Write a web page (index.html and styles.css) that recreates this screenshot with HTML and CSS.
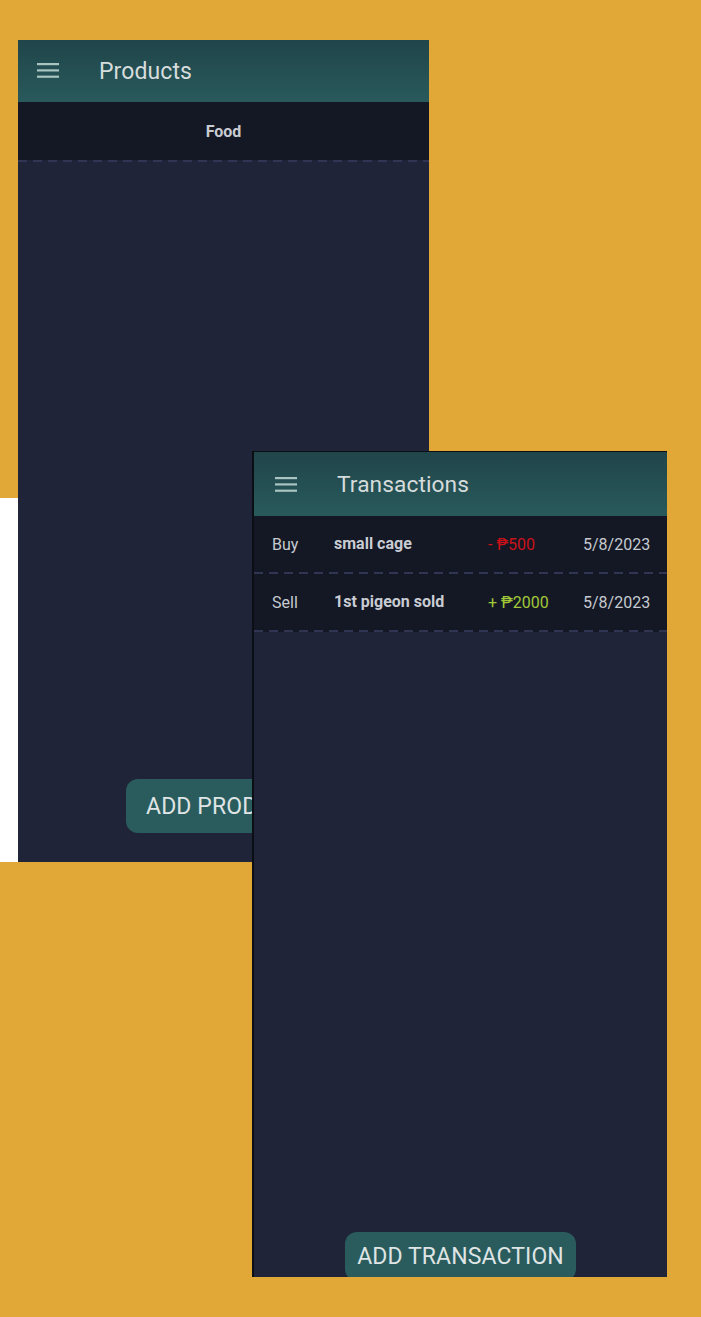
FILE: index.html
```html
<!DOCTYPE html>
<html>
<head>
<meta charset="utf-8">
<link rel="stylesheet" href="styles.css">
</head>
<body>
<div class="canvas">
  <div class="white-block"></div>

  <section class="screen screen-products">
    <header class="appbar appbar-products">
      <svg class="menu" width="22" height="15" viewBox="0 0 22 15"><rect x="0" y="0" width="22" height="2.2" fill="#a9c4c1"/><rect x="0" y="6.3" width="22" height="2.2" fill="#a9c4c1"/><rect x="0" y="12.6" width="22" height="2.2" fill="#a9c4c1"/></svg>
      <h1 class="title">Products</h1>
    </header>
    <div class="tabbar">
      <span class="tab">Food</span>
    </div>
    <div class="spacer"></div>
    <div class="actions actions-products">
      <button class="btn">ADD PRODUCT</button>
    </div>
  </section>

  <section class="screen screen-tx">
    <header class="appbar appbar-tx">
      <svg class="menu" width="22" height="15" viewBox="0 0 22 15"><rect x="0" y="0" width="22" height="2.2" fill="#a9c4c1"/><rect x="0" y="6.3" width="22" height="2.2" fill="#a9c4c1"/><rect x="0" y="12.6" width="22" height="2.2" fill="#a9c4c1"/></svg>
      <h1 class="title">Transactions</h1>
    </header>
    <div class="tx-list">
      <div class="tx-row">
        <span class="tx-type">Buy</span>
        <span class="tx-name">small cage</span>
        <span class="tx-amt neg">- ₱500</span>
        <span class="tx-date">5/8/2023</span>
      </div>
      <div class="tx-row">
        <span class="tx-type">Sell</span>
        <span class="tx-name">1st pigeon sold</span>
        <span class="tx-amt pos">+ ₱2000</span>
        <span class="tx-date">5/8/2023</span>
      </div>
    </div>
    <div class="spacer"></div>
    <div class="actions actions-tx">
      <button class="btn">ADD TRANSACTION</button>
    </div>
  </section>
</div>
</body>
</html>
```

FILE: styles.css
```css
html, body {
  margin: 0;
  padding: 0;
  background: #e1a838;
}
body {
  font-family: Roboto, "Liberation Sans", sans-serif;
}
.canvas {
  position: relative;
  width: 701px;
  height: 1317px;
  overflow: hidden;
  background: #e1a838;
}
.white-block {
  position: absolute;
  left: 0;
  top: 498px;
  width: 18px;
  height: 364px;
  background: #ffffff;
}
.screen {
  position: absolute;
  display: flex;
  flex-direction: column;
  background: #1f2438;
  overflow: hidden;
  box-sizing: border-box;
}
.screen-products {
  left: 18px;
  top: 40px;
  width: 411px;
  height: 822px;
}
.screen-tx {
  left: 252px;
  top: 451px;
  width: 415px;
  height: 826px;
  border-left: 2px solid #0c0e15;
  border-top: 1px solid #0c0e15;
}
.appbar {
  display: flex;
  align-items: center;
  background: linear-gradient(#20454a, #295a5b);
  flex: none;
}
.appbar-products {
  height: 62px;
  padding-left: 19px;
}
.appbar-tx {
  height: 64px;
  padding-left: 21px;
}
.menu {
  display: block;
  flex: none;
}
.appbar-products .menu { margin-top: -2px; }
.title {
  margin: 0;
  font-weight: 400;
  font-size: 23px;
  color: #d6dcdc;
  letter-spacing: 0.1px;
}
.appbar-products .title { margin-left: 40px; }
.appbar-tx .title { margin-left: 40px; font-size: 22.7px; margin-top: 1px; }
.tabbar {
  height: 58px;
  background: #141824;
  display: flex;
  align-items: center;
  justify-content: center;
  position: relative;
  flex: none;
}
.tabbar::after,
.tx-row::after {
  content: "";
  position: absolute;
  left: 0;
  right: 0;
  bottom: 0;
  height: 2px;
  background: repeating-linear-gradient(90deg, #2f3553 0 9px, transparent 9px 15px);
}
.tabbar::after { bottom: -2px; }
.tab {
  font-size: 16px;
  font-weight: 700;
  color: #c8ccd2;
}
.tx-list {
  display: flex;
  flex-direction: column;
  flex: none;
}
.tx-row {
  position: relative;
  height: 58px;
  box-sizing: border-box;
  padding-bottom: 1px;
  background: #141824;
  display: grid;
  grid-template-columns: 62px 154px 95px auto;
  align-items: center;
  padding-left: 18px;
  color: #c6cad0;
}
.tx-type { font-size: 16px; }
.tx-name { font-size: 16px; font-weight: 700; color: #c9ccd3; margin-top: -3px; }
.tx-amt { font-size: 16px; }
.tx-date { font-size: 16px; }
.neg { color: #cc111b; }
.pos { color: #a2c83a; }
.spacer { flex: 1; }
.actions {
  display: flex;
  justify-content: center;
  flex: none;
}
.actions-products { padding-bottom: 29px; }
.actions-tx { margin-bottom: -4px; }
.btn {
  height: 54px;
  border: none;
  border-radius: 12px;
  background: #2a5c5e;
  color: #dfe4e4;
  font-family: Roboto, "Liberation Sans", sans-serif;
  font-size: 23px;
  padding: 0 20px;
  letter-spacing: 0.1px;
}
.actions-tx .btn { padding: 0 12px; height: 49px; }
```
